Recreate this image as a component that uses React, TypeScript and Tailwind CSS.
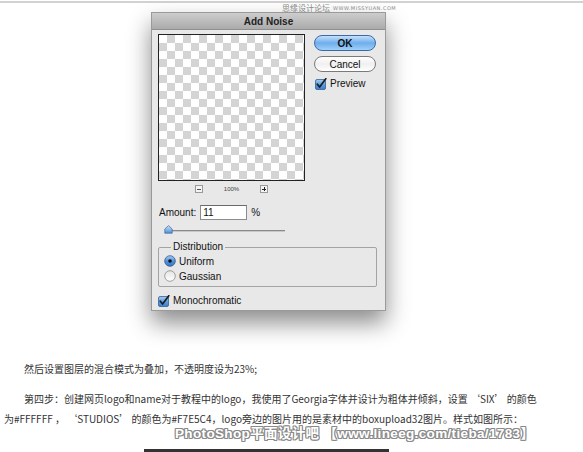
import React from "react";

const Check = () => (
  <svg width="12" height="12" viewBox="0 0 12 12" className="shrink-0">
    <defs>
      <linearGradient id="cb" x1="0" y1="0" x2="0" y2="1">
        <stop offset="0" stopColor="#a9cdf2" />
        <stop offset="0.5" stopColor="#5b9ee0" />
        <stop offset="1" stopColor="#3b7fcc" />
      </linearGradient>
    </defs>
    <rect x="0.5" y="1.5" width="10" height="10" rx="1.5" fill="url(#cb)" stroke="#3b5f8f" strokeWidth="0.8" />
    <path d="M2.3 6.2 L4.6 9 L10.8 0.8" fill="none" stroke="#1b1b24" strokeWidth="1.7" strokeLinecap="round" strokeLinejoin="round" />
  </svg>
);

const Radio = ({ on }: { on: boolean }) => (
  <svg width="12" height="12" viewBox="0 0 12 12" className="shrink-0">
    <defs>
      <linearGradient id="rb" x1="0" y1="0" x2="0" y2="1">
        <stop offset="0" stopColor="#a9cdf2" />
        <stop offset="0.5" stopColor="#4f93dc" />
        <stop offset="1" stopColor="#3677c8" />
      </linearGradient>
      <linearGradient id="rw" x1="0" y1="0" x2="0" y2="1">
        <stop offset="0" stopColor="#e4e4e4" />
        <stop offset="1" stopColor="#ffffff" />
      </linearGradient>
    </defs>
    <circle cx="6" cy="6" r="5.3" fill={on ? "url(#rb)" : "url(#rw)"} stroke={on ? "#34598a" : "#8a8a8a"} strokeWidth="0.8" />
    {on && <circle cx="6" cy="6" r="1.8" fill="#111" />}
  </svg>
);

export default function App() {
  return (
    <div className="relative w-[583px] h-[452px] overflow-hidden bg-white font-['Noto_Sans_CJK_SC',sans-serif]">
      <div className="mt-px h-[2px] bg-[#d2d2d2]" />

      <div className="absolute left-[282px] top-[3px] flex items-center gap-[3px] text-[#8a8a8a] z-10">
        <span className="text-[8px] leading-[10px]">思缘设计论坛</span>
        <span className="text-[5px] leading-[10px] font-['DejaVu_Sans',sans-serif] tracking-[0.5px]">WWW.MISSYUAN.COM</span>
      </div>

      {/* Dialog */}
      <div className="ml-[151px] mt-[9px] w-[235px] h-[299px] bg-[#e8e8e8] border border-[#9a9a9a] shadow-[0_12px_22px_rgba(0,0,0,0.45)] font-['Liberation_Sans',sans-serif] text-[#111]">
        <div className="h-[17px] bg-gradient-to-b from-[#cdcdcd] to-[#ababab] border-b border-[#8f8f8f] flex items-center justify-center text-[10px] font-bold text-[#222]">
          Add Noise
        </div>
        <div className="flex pl-[6px] pt-[4px]">
          <div className="flex flex-col">
            <div className="w-[147px] h-[147px] border border-[#222] bg-[conic-gradient(#d4d4d4_25%,#ffffff_0_50%,#d4d4d4_0_75%,#ffffff_0)] bg-[length:16px_16px]" />
            <div className="flex items-center justify-center gap-[21px] mt-[3px] h-[10px]">
              <div className="w-[8px] h-[8px] border border-[#9a9a9a] bg-[#f4f4f4] flex items-center justify-center">
                <div className="w-[4px] h-px bg-[#555]" />
              </div>
              <span className="text-[6px] text-[#444]">100%</span>
              <div className="relative w-[8px] h-[8px] border border-[#9a9a9a] bg-[#f4f4f4] flex items-center justify-center">
                <div className="w-[4px] h-px bg-[#222]" />
                <div className="absolute w-px h-[4px] bg-[#222]" />
              </div>
            </div>
          </div>
          <div className="flex flex-col ml-[9px] pt-[1px]">
            <div className="w-[62px] h-[16px] rounded-full border border-[#3c6aa8] bg-gradient-to-b from-[#c6e0fa] via-[#6eaeec] to-[#9fd0fa] flex items-center justify-center text-[10px] font-bold text-[#111]">
              OK
            </div>
            <div className="mt-[5px] w-[62px] h-[16px] rounded-full border border-[#7a7a7a] bg-gradient-to-b from-[#ffffff] via-[#f0f0f0] to-[#ffffff] flex items-center justify-center text-[10px] text-[#111]">
              Cancel
            </div>
            <div className="mt-[4px] ml-[1px] flex items-center gap-[3px] text-[10px]">
              <Check />
              <span>Preview</span>
            </div>
          </div>
        </div>

        <div className="flex items-center pl-[7px] mt-[11px] text-[10px]">
          <span>Amount:</span>
          <div className="ml-[4px] w-[47px] h-[15px] bg-white border border-[#8c8c8c] border-t-[#6a6a6a] flex items-center pl-[2px] text-[10px]">
            11
          </div>
          <span className="ml-[4px]">%</span>
        </div>

        <div className="relative ml-[13px] mt-[5px] w-[120px] h-[10px]">
          <div className="absolute left-0 right-0 top-[5px] h-[2px] bg-[#8a8a8a] border-b border-[#c8c8c8]" />
          <svg width="9" height="9" viewBox="0 0 9 9" className="absolute left-[-1px] top-0">
            <defs>
              <linearGradient id="th" x1="0" y1="0" x2="0" y2="1">
                <stop offset="0" stopColor="#cfe3f8" />
                <stop offset="1" stopColor="#4d8fd8" />
              </linearGradient>
            </defs>
            <path d="M4.5 0.6 L8.2 4 L8.2 8.2 L0.8 8.2 L0.8 4 Z" fill="url(#th)" stroke="#3d669b" strokeWidth="0.7" />
          </svg>
        </div>

        <div className="relative ml-[6px] mt-[12px] w-[219px] h-[40px] border border-[#a3a3a3] rounded-[2px]">
          <span className="absolute left-[12px] top-[-8px] px-[2px] bg-[#e8e8e8] text-[10px] leading-[14px]">Distribution</span>
          <div className="flex flex-col gap-[3px] pl-[5px] pt-[7px] text-[10px]">
            <div className="flex items-center gap-[3px] h-[12px]">
              <Radio on />
              <span>Uniform</span>
            </div>
            <div className="flex items-center gap-[3px] h-[12px]">
              <Radio on={false} />
              <span>Gaussian</span>
            </div>
          </div>
        </div>

        <div className="flex items-center gap-[3px] pl-[6px] mt-[6px] text-[10px]">
          <Check />
          <span>Monochromatic</span>
        </div>
      </div>

      {/* Article text */}
      <div className="mt-[51px] pl-[4px] text-[10px] leading-[14px] text-[#333]">
        <p className="indent-[20px]">然后设置图层的混合模式为叠加，不透明度设为23%;</p>
        <p className="indent-[20px] mt-[16px]">第四步：创建网页logo和name对于教程中的logo，我使用了Georgia字体并设计为粗体并倾斜，设置 ‘SIX’ 的颜色</p>
        <p className="mt-[6px]">为#FFFFFF ， ‘STUDIOS’ 的颜色为#F7E5C4，logo旁边的图片用的是素材中的boxupload32图片。样式如图所示：</p>
      </div>

      <div className="absolute left-[175px] top-[427px] text-[13.5px] font-bold leading-[14px] tracking-[0.35px] text-white font-['Liberation_Sans','Noto_Sans_CJK_SC',sans-serif] [text-shadow:1px_0_#8a8a8a,-1px_0_#8a8a8a,0_1px_#8a8a8a,0_-1px_#8a8a8a,1px_1px_#8a8a8a,-1px_-1px_#8a8a8a,1px_-1px_#8a8a8a,-1px_1px_#8a8a8a]">
        PhotoShop平面设计吧 【www.lineeg.com/tieba/1783】
      </div>

      <div className="ml-[144px] mt-[23px] w-[245px] h-[6px] bg-[#333333]" />
    </div>
  );
}
